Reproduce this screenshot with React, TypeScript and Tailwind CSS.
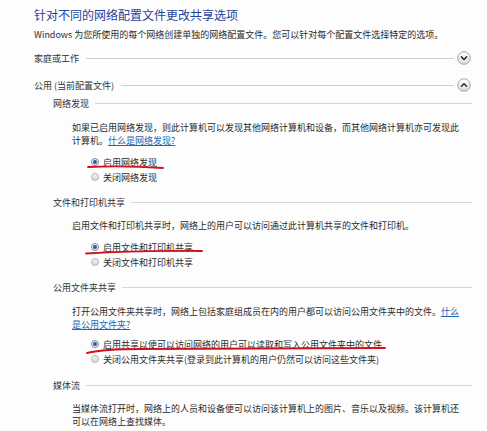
import React from 'react';

const FONT = '"Noto Sans CJK SC", "Noto Sans", sans-serif';

const Chevron: React.FC<{ up?: boolean }> = ({ up }) => (
  <svg width="14" height="14" viewBox="0 0 14 14" className="ml-[3px] mr-[1px] shrink-0">
    <defs>
      <linearGradient id={up ? 'gu' : 'gd'} x1="0" y1="0" x2="0" y2="1">
        <stop offset="0" stopColor="#ffffff" />
        <stop offset="1" stopColor="#dcdcdc" />
      </linearGradient>
    </defs>
    <circle cx="7" cy="7" r="6.3" fill={`url(#${up ? 'gu' : 'gd'})`} stroke="#9a9a9a" strokeWidth="0.9" />
    <path
      d={up ? 'M4.4 8.3 L7 5.7 L9.6 8.3' : 'M4.4 5.9 L7 8.5 L9.6 5.9'}
      fill="none"
      stroke="#2e2e2e"
      strokeWidth="1.5"
      strokeLinecap="round"
      strokeLinejoin="round"
    />
  </svg>
);

const SectionRow: React.FC<{ label: string; up?: boolean; className?: string }> = ({ label, up, className }) => (
  <div className={`flex items-center h-[16px] ${className ?? ''}`}>
    <span className="text-[9px] leading-[13px] text-[#333] whitespace-nowrap">{label}</span>
    <div className="flex-1 h-px bg-[#cfcfcf] ml-[7px]" />
    <Chevron up={up} />
  </div>
);

const SubRow: React.FC<{ label: string; className?: string }> = ({ label, className }) => (
  <div className={`flex items-center h-[13px] pl-[19px] pr-[15px] ${className ?? ''}`}>
    <span className="text-[9px] leading-[13px] text-[#333] whitespace-nowrap">{label}</span>
    <div className="flex-1 h-px bg-[#d6d6d6] ml-[6px]" />
  </div>
);

const Radio: React.FC<{ checked?: boolean; label: string }> = ({ checked, label }) => (
  <div className="flex items-center h-[15px] pl-[57px]">
    <span
      className={`w-[8px] h-[8px] rounded-full border shrink-0 flex items-center justify-center ${
        checked ? 'border-[#7a8a9c] bg-[#eef2f6]' : 'border-[#b4b4b4] bg-gradient-to-b from-[#f4f4f4] to-[#d8d8d8]'
      }`}
    >
      {checked && <span className="w-[4px] h-[4px] rounded-full bg-[#2a5a9a]" />}
    </span>
    <span className="ml-[4px] text-[9px] leading-[13px] text-[#2b2b2b] whitespace-nowrap">{label}</span>
  </div>
);

const Link: React.FC<{ children: React.ReactNode }> = ({ children }) => (
  <span className="text-[#1c66b8] underline underline-offset-[1px]">{children}</span>
);

export default function App() {
  return (
    <div className="relative w-[487px] h-[431px] overflow-hidden bg-[#fdfdfe]" style={{ fontFamily: FONT }}>
      <div className="pl-[34px]">
        <div className="mt-[7px] h-[16px] text-[12px] leading-[16px] text-[#24439a] whitespace-nowrap">
          针对不同的网络配置文件更改共享选项
        </div>
        <div className="mt-[4.5px] h-[13px] text-[9px] leading-[13px] text-[#2b2b2b] whitespace-nowrap">
          Windows 为您所使用的每个网络创建单独的网络配置文件。您可以针对每个配置文件选择特定的选项。
        </div>

        <SectionRow label="家庭或工作" className="mt-[9.5px] pr-[15px]" />
        <SectionRow label="公用 (当前配置文件)" up className="mt-[11px] pr-[15px]" />

        <SubRow label="网络发现" className="mt-[3.5px]" />
        <div className="mt-[11px] pl-[38px] text-[9px] leading-[13px] text-[#2b2b2b] whitespace-nowrap">
          <div>如果已启用网络发现，则此计算机可以发现其他网络计算机和设备，而其他网络计算机亦可发现此</div>
          <div>
            计算机。<Link>什么是网络发现?</Link>
          </div>
        </div>
        <div className="mt-[8px]">
          <Radio checked label="启用网络发现" />
          <Radio label="关闭网络发现" />
        </div>

        <SubRow label="文件和打印机共享" className="mt-[11px]" />
        <div className="mt-[10px] pl-[38px] text-[9px] leading-[13px] text-[#2b2b2b] whitespace-nowrap">
          启用文件和打印机共享时，网络上的用户可以访问通过此计算机共享的文件和打印机。
        </div>
        <div className="mt-[8px]">
          <Radio checked label="启用文件和打印机共享" />
          <Radio label="关闭文件和打印机共享" />
        </div>

        <SubRow label="公用文件夹共享" className="mt-[11px]" />
        <div className="mt-[11px] pl-[38px] text-[9px] leading-[13px] text-[#2b2b2b] whitespace-nowrap">
          <div>
            打开公用文件夹共享时，网络上包括家庭组成员在内的用户都可以访问公用文件夹中的文件。<Link>什么</Link>
          </div>
          <div>
            <Link>是公用文件夹?</Link>
          </div>
        </div>
        <div className="mt-[6px]">
          <Radio checked label="启用共享以便可以访问网络的用户可以读取和写入公用文件夹中的文件" />
          <Radio label="关闭公用文件夹共享(登录到此计算机的用户仍然可以访问这些文件夹)" />
        </div>

        <SubRow label="媒体流" className="mt-[12px]" />
        <div className="mt-[10px] pl-[38px] text-[9px] leading-[13.5px] text-[#2b2b2b] whitespace-nowrap">
          <div>当媒体流打开时，网络上的人员和设备便可以访问该计算机上的图片、音乐以及视频。该计算机还</div>
          <div>可以在网络上查找媒体。</div>
        </div>
      </div>

      {/* hand-drawn red underlines */}
      <svg className="absolute inset-0 pointer-events-none" width="487" height="431" viewBox="0 0 487 431">
        <path d="M88 167 Q125 165.5 163 168" fill="none" stroke="#d0121c" strokeWidth="1.8" strokeLinecap="round" />
        <path d="M86 253.5 Q140 250 202 251" fill="none" stroke="#d0121c" strokeWidth="1.8" strokeLinecap="round" />
        <path d="M87 353 Q105 349 140 349 L385 348" fill="none" stroke="#d0121c" strokeWidth="1.8" strokeLinecap="round" />
      </svg>
    </div>
  );
}
